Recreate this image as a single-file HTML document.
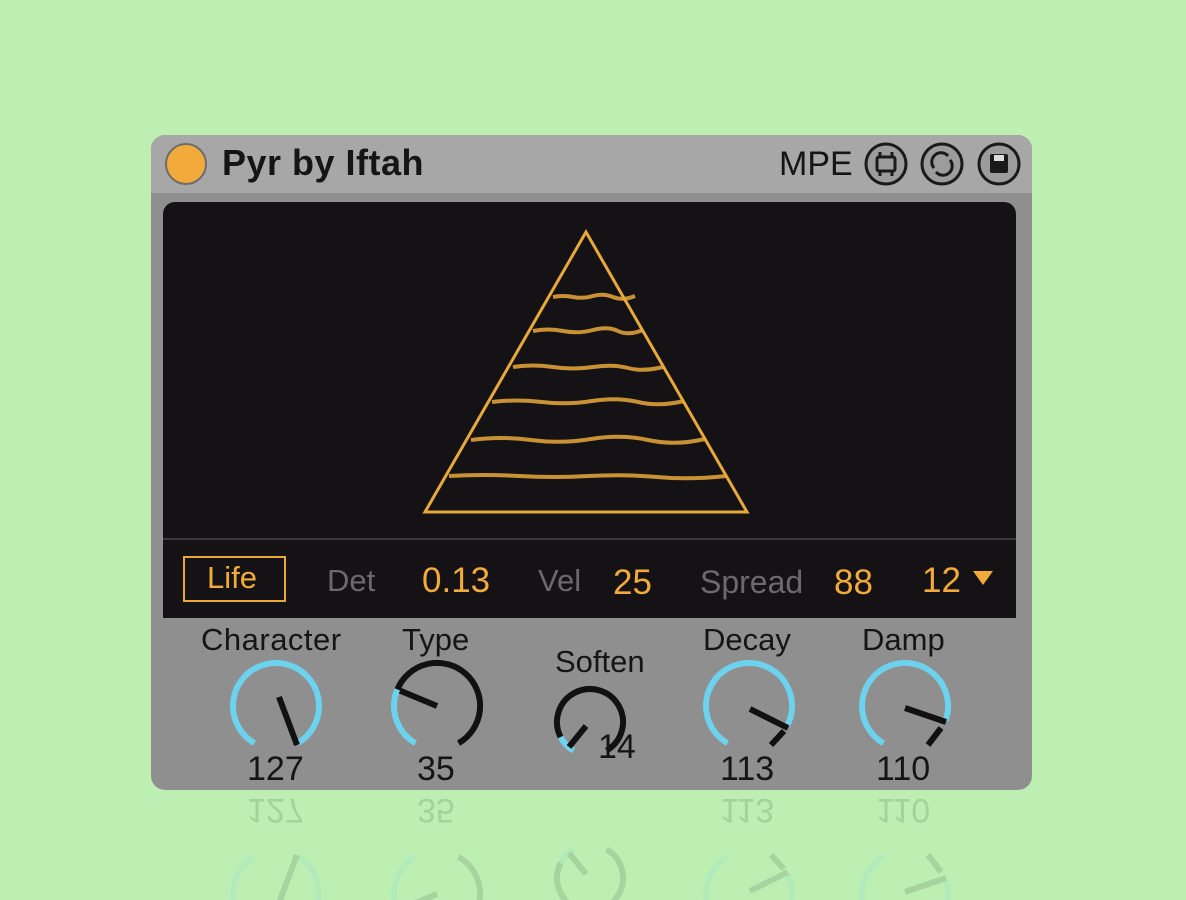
<!DOCTYPE html><html><head><style>
body{margin:0;width:1186px;height:900px;background:#bdefb3;overflow:hidden;font-family:"Liberation Sans",sans-serif;position:relative}
.t{position:absolute;white-space:nowrap;line-height:1}
</style></head><body>
<div style="position:absolute;left:151px;top:135px;width:881px;height:655px;background:#8f8f8f;border-radius:14px;overflow:hidden">
<div style="position:absolute;left:0;top:0;width:881px;height:58px;background:#a7a7a7"></div>
</div>
<div style="position:absolute;left:163px;top:202px;width:853px;height:416px;background:#141214;border-radius:12px 12px 0 0"></div>
<div style="position:absolute;left:163px;top:538px;width:853px;height:2px;background:#3a3a3a"></div>
<div style="position:absolute;left:165px;top:143px;width:38px;height:38px;border-radius:50%;background:#f2aa3a;border:2px solid #6d6d6d"></div>
<div class="t" style="left:222px;top:145px;font-size:36px;font-weight:bold;color:#151515;letter-spacing:0.5px">Pyr by Iftah</div>
<div class="t" style="left:779px;top:147px;font-size:34px;color:#151515">MPE</div>
<svg width="1186" height="900" style="position:absolute;left:0;top:0">
<g fill="none" stroke="#1a1a1a" stroke-width="3">
<circle cx="886" cy="164" r="20" fill="#9c9c9c"/><circle cx="942" cy="164" r="20" fill="#9c9c9c"/><circle cx="999" cy="164" r="20" fill="#9c9c9c"/>
<rect x="877" y="157" width="18" height="14" rx="2"/><path d="M880 152v5M892 152v5M880 171v5M892 171v5"/>
<path d="M934 168a9 9 0 0 1 14-12M950 160a9 9 0 0 1-14 12"/>
</g>
<rect x="990" y="154" width="18" height="19" rx="2" fill="#1a1a1a"/><rect x="994" y="155" width="10" height="6" fill="#ddd"/>
<g stroke="#e8a93a" fill="none">
<polygon points="586,232 425,512 747,512" stroke-width="3"/>
<g stroke-width="4" opacity="0.85">
<path d="M553 297q10 -2 20 0t20 -1t20 1t22 -1"/>
<path d="M533 331q15 -3 30 0t30 -1t25 1t25 -1"/>
<path d="M513 367q20 -3 40 0t40 0t35 1t35 -1"/>
<path d="M492 402q25 -3 50 0t50 -1t46 1t46 -1"/>
<path d="M471 440q30 -4 60 0t60 -1t57 1t57 -1"/>
<path d="M449 476q35 -2 70 0t70 0t68 1t69 -1"/>
</g></g>
<g id="k" fill="none" stroke-width="6">
<path d="M254.5 743.2A43 43 0 1 1 297.5 743.2" stroke="#6cd2ee"/>
<path d="M279 697L297 745" stroke="#111"/>
<path d="M415.5 743.2A43 43 0 0 1 397.4 689.4" stroke="#6cd2ee"/>
<path d="M397.4 689.4A43 43 0 1 1 458.5 743.2" stroke="#111"/>
<path d="M437 706L400 690.6" stroke="#111"/>
<path d="M573.5 750.6A33 33 0 0 1 560.6 737" stroke="#6cd2ee"/>
<path d="M560.6 737A33 33 0 1 1 606.5 750.6" stroke="#111"/>
<path d="M586 726L569 747" stroke="#111"/>
<path d="M727.5 743.2A43 43 0 1 1 787.3 725.5" stroke="#6cd2ee"/>
<path d="M784 731L771 745" stroke="#111"/>
<path d="M750 709L788 728" stroke="#111"/>
<path d="M883.5 743.2A43 43 0 1 1 945.5 720.6" stroke="#6cd2ee"/>
<path d="M941 728L928 745" stroke="#111"/>
<path d="M905 708L946 722" stroke="#111"/>
</g>
<g transform="translate(0,1600) scale(1,-1)" opacity="0.12"><use href="#k"/></g>
<polygon points="973,571 993,571 983,585" fill="#f2aa3a"/>
</svg>
<div style="position:absolute;left:183px;top:556px;width:99px;height:42px;border:2px solid #e8a93a"></div>
<div class="t" style="left:207px;top:562px;font-size:31px;color:#f2aa3a">Life</div>
<div class="t" style="left:327px;top:565px;font-size:31px;color:#6a6a6a">Det</div>
<div class="t" style="left:422px;top:563px;font-size:35px;color:#f2aa3a">0.13</div>
<div class="t" style="left:538px;top:565px;font-size:31px;color:#6a6a6a">Vel</div>
<div class="t" style="left:613px;top:565px;font-size:35px;color:#f2aa3a">25</div>
<div class="t" style="left:700px;top:566px;font-size:32px;color:#6a6a6a">Spread</div>
<div class="t" style="left:834px;top:565px;font-size:35px;color:#f2aa3a">88</div>
<div class="t" style="left:922px;top:563px;font-size:35px;color:#f2aa3a">12</div>
<div class="t" style="left:201px;top:624px;font-size:31px;color:#151515;letter-spacing:0.5px">Character</div>
<div class="t" style="left:402px;top:624px;font-size:31px;color:#151515">Type</div>
<div class="t" style="left:555px;top:646px;font-size:31px;color:#151515">Soften</div>
<div class="t" style="left:703px;top:624px;font-size:31px;color:#151515">Decay</div>
<div class="t" style="left:862px;top:624px;font-size:31px;color:#151515">Damp</div>
<div class="t" style="left:247px;top:752px;font-size:34px;color:#151515">127</div>
<div class="t" style="left:417px;top:752px;font-size:34px;color:#151515">35</div>
<div class="t" style="left:598px;top:730px;font-size:34px;color:#151515">14</div>
<div class="t" style="left:720px;top:752px;font-size:34px;color:#151515">113</div>
<div class="t" style="left:876px;top:752px;font-size:34px;color:#151515">110</div>
<div style="opacity:0.12;transform:scaleY(-1);position:absolute;left:0;top:795px;width:1186px;height:34px">
<div class="t" style="left:247px;top:2px;font-size:34px">127</div><div class="t" style="left:417px;top:2px;font-size:34px">35</div><div class="t" style="left:720px;top:2px;font-size:34px">113</div><div class="t" style="left:876px;top:2px;font-size:34px">110</div>
</div>
</body></html>
